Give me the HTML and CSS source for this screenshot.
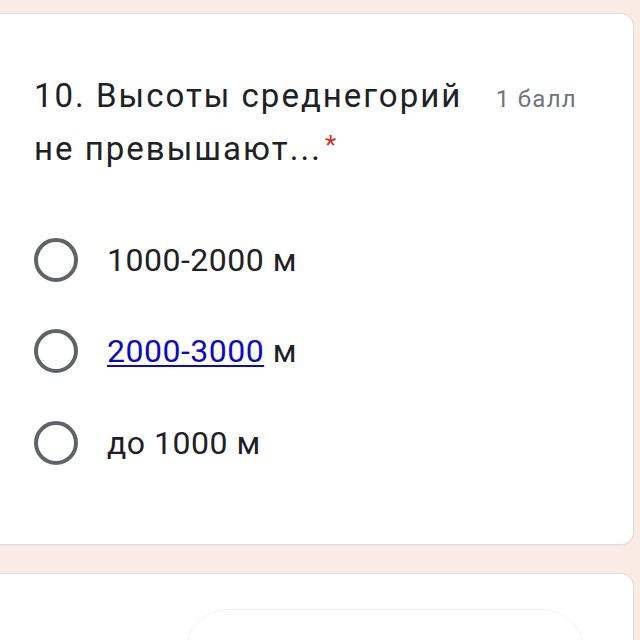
FILE: index.html
```html
<!DOCTYPE html>
<html lang="ru">
<head>
<meta charset="utf-8">
<link rel="stylesheet" href="styles.css">
</head>
<body>
<div class="card">
  <div class="head">
    <div class="title">10. Высоты среднегорий не превышают... <span class="req">*</span></div>
    <div class="points">1 балл</div>
  </div>
  <div class="options">
    <div class="opt"><span class="radio"></span><span class="label">1000-2000 м</span></div>
    <div class="opt"><span class="radio"></span><span class="label"><a class="link" href="#">2000-3000</a> м</span></div>
    <div class="opt"><span class="radio"></span><span class="label">до 1000 м</span></div>
  </div>
</div>
<div class="card card2">
  <div class="inner"></div>
</div>
</body>
</html>
```
FILE: styles.css
```css
html, body {
  margin: 0;
  padding: 0;
  background: #f8ece5;
  height: 640px;
  overflow: hidden;
}
body {
  font-family: Roboto, "Noto Sans", sans-serif;
  color: #202124;
}
.card {
  background: #fff;
  border: 1px solid #dedcdc;
  border-left: none;
  border-radius: 0 13px 13px 0;
  margin: 13px 6px 0 0;
  padding: 55px 56px 0 34px;
  height: 475px;
  box-shadow: 0 1px 1px rgba(0,0,0,0.04);
}
.head {
  display: flex;
  align-items: baseline;
  justify-content: space-between;
}
.title {
  width: 450px;
  font-size: 33px;
  letter-spacing: 2px;
  line-height: 53px;
  color: #202124;
}
.req {
  color: #d93025;
  font-size: 26px;
  line-height: 0;
  vertical-align: 6px;
  letter-spacing: 0;
  margin-left: -7px;
}
.points {
  font-size: 24px;
  letter-spacing: 1.3px;
  color: #70757a;
  white-space: nowrap;
}
.options {
  margin-top: 39px;
  display: flex;
  flex-direction: column;
}
.opt {
  height: 91.5px;
  display: flex;
  align-items: center;
  gap: 29px;
}
.radio {
  width: 36px;
  height: 36px;
  border: 4.5px solid #5f6368;
  border-radius: 50%;
  flex: none;
}
.label {
  font-size: 32px;
  letter-spacing: 0.5px;
  color: #202124;
}
.link {
  color: #0a0ac8;
  text-decoration: underline;
  text-decoration-thickness: 2px;
  text-underline-offset: 3px;
}
.card2 {
  margin-top: 28px;
  height: 200px;
  padding: 35px 48px 0 185px;
}
.inner {
  height: 200px;
  border: 1px solid #f3f3f3;
  border-radius: 44px;
}
```
